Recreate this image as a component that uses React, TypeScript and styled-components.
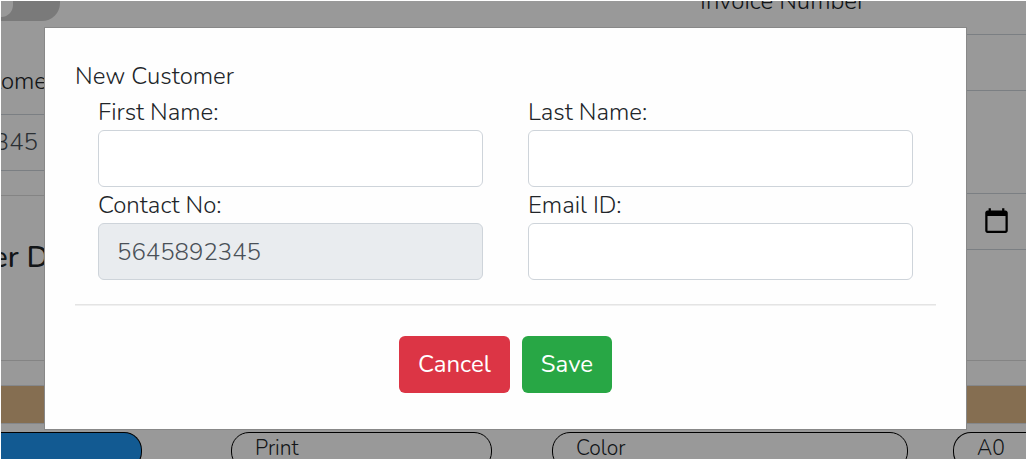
import React from "react";
import styled, { createGlobalStyle } from "styled-components";

const Global = createGlobalStyle`
  *, *::before, *::after { box-sizing: border-box; }
  body {
    margin: 0;
    background: #fff;
    color: #212529;
    font: 300 24px/36px Nunito, Lato, sans-serif;
    overflow: hidden;
  }
  input, button { font: inherit; color: inherit; margin: 0; }
`;

const Screen = styled.div`
  position: relative;
  height: 100vh;
  border: 1px solid #fff;
  overflow: hidden;
`;

const Columns = styled.div`
  display: flex;
  justify-content: space-between;
  min-height: 360px;
  border-bottom: 1px solid #dcdcdc;
`;

const Side = styled.div`
  width: 48px;
`;

const Invoice = styled.div`
  width: 326px;
`;

const Toggle = styled.div`
  width: 59px;
  height: 20px;
  background: #ccc;
  border-radius: 0 0 18px 0;
`;

const Knob = styled.div`
  width: 12px;
  height: 16px;
  background: #fff;
  border-radius: 0 0 12px 0;
`;

const ClippedText = styled.div<{ $inset?: number }>`
  display: flex;
  justify-content: flex-end;
  padding-right: ${(p) => p.$inset ?? 0}px;
  white-space: nowrap;
  overflow: hidden;
`;

const SideLabel = styled(ClippedText)`
  padding-top: 42px;
`;

const SideValue = styled(ClippedText)`
  margin-top: 15px;
  height: 57px;
  padding-bottom: 2px;
  align-items: center;
  border: solid #ced4da;
  border-width: 1px 0;
  color: #495057;
`;

const SideCard = styled.div`
  margin-top: 24px;
  padding-top: 44px;
  border-top: 1px solid #dcdcdc;
  font-size: 30px;
  font-weight: 500;
`;

const InvoiceLabel = styled.label`
  display: block;
  margin-top: -18px;
  padding-bottom: 15px;
`;

const PageField = styled.div`
  display: flex;
  align-items: center;
  justify-content: flex-end;
  height: 57px;
  padding: 0 16px 2px 0;
  border: solid #ced4da;
  border-width: 1px 0;

  & + & { margin-top: 102px; }
`;

const PageInput = styled.input`
  flex: 1;
  min-width: 0;
  border: 0;
  background: transparent;
`;

const IconButton = styled.button`
  display: flex;
  padding: 0;
  border: 0;
  background: none;
  color: #000;
`;

const Band = styled.div`
  height: 39px;
  margin-top: 24px;
  background: #deb887;
  border: solid #dee2e6;
  border-width: 1px 0;
`;

const PillRow = styled.div`
  display: grid;
  grid-template-columns: 230fr 321fr 401fr 73fr;
  margin-top: 8px;
`;

const Pill = styled.input<{ $gap: number; $first?: boolean; $last?: boolean }>`
  width: calc(100% - ${(p) => p.$gap}px);
  height: 38px;
  padding: 0 0 6px 23px;
  font-size: 21px;
  border: 1px solid #000;
  border-left-width: ${(p) => (p.$first ? 0 : 1)}px;
  border-right-width: ${(p) => (p.$last ? 0 : 1)}px;
  border-radius: ${(p) => (p.$first ? "0 18px 18px 0" : p.$last ? "18px 0 0 18px" : "18px")};
  background: ${(p) => (p.$first ? "#1e96f3" : "transparent")};
`;

const Backdrop = styled.div`
  position: absolute;
  inset: 0;
  padding: 26px 59px 0 43px;
  background: rgba(0, 0, 0, 0.4);
`;

const Dialog = styled.form`
  padding: 30px 30px 36px;
  background: #fefefe;
  border: 1px solid #888;
`;

const Title = styled.h1`
  margin: 0;
  font: inherit;
`;

const Fields = styled.div`
  display: grid;
  grid-template-columns: 1fr 1fr;
  column-gap: 45px;
  padding: 0 23px;
`;

const Field = styled.label`
  display: block;
`;

const TextBox = styled.input`
  display: block;
  width: 100%;
  height: 57px;
  padding: 9px 18px;
  border: 1px solid #ced4da;
  border-radius: 6px;
  background: #fff;
  color: #495057;

  &:read-only { background: #e9ecef; }
`;

const Divider = styled.hr`
  height: 2px;
  margin: 24px 0 30px;
  border: solid;
  border-width: 1px 0;
  border-color: #e4e4e4 transparent #f0f0f0;
`;

const Actions = styled.div`
  display: flex;
  justify-content: center;
  gap: 12px;
`;

const Action = styled.button<{ $color: string }>`
  height: 57px;
  padding: 0 19px 2px;
  border: 0;
  border-radius: 6px;
  background: ${(p) => p.$color};
  color: #fff;
  font-weight: 400;
`;

export default function App() {
  return (
    <>
      <Global />
      <Screen>
        <Columns>
          <Side>
            <Toggle>
              <Knob />
            </Toggle>
            <SideLabel $inset={2}>tome</SideLabel>
            <SideValue $inset={11}>345</SideValue>
            <SideCard>
              <ClippedText>er D</ClippedText>
            </SideCard>
          </Side>
          <Invoice>
            <InvoiceLabel htmlFor="invoice">Invoice Number</InvoiceLabel>
            <PageField>
              <PageInput id="invoice" />
            </PageField>
            <PageField>
              <PageInput aria-label="Invoice date" />
              <IconButton type="button" aria-label="Open calendar">
                <svg width="27" height="27" viewBox="0 0 24 24" fill="currentColor">
                  <path d="M20 3h-1V1h-2v2H7V1H5v2H4c-1.1 0-2 .9-2 2v16c0 1.1.9 2 2 2h16c1.1 0 2-.9 2-2V5c0-1.1-.9-2-2-2zm0 18H4V8h16v13z" />
                </svg>
              </IconButton>
            </PageField>
          </Invoice>
        </Columns>
        <Band />
        <PillRow>
          <Pill $gap={89} $first readOnly aria-label="Item" />
          <Pill $gap={60} readOnly defaultValue="Print" aria-label="Service" />
          <Pill $gap={45} readOnly defaultValue="Color" aria-label="Colour mode" />
          <Pill $gap={0} $last readOnly defaultValue="A0" aria-label="Paper size" />
        </PillRow>
        <Backdrop>
          <Dialog role="dialog" aria-label="New Customer">
            <Title>New Customer</Title>
            <Fields>
              <Field>
                First Name:
                <TextBox />
              </Field>
              <Field>
                Last Name:
                <TextBox />
              </Field>
              <Field>
                Contact No:
                <TextBox defaultValue="5645892345" readOnly />
              </Field>
              <Field>
                Email ID:
                <TextBox type="email" />
              </Field>
            </Fields>
            <Divider />
            <Actions>
              <Action type="button" $color="#dc3545">Cancel</Action>
              <Action type="button" $color="#28a745">Save</Action>
            </Actions>
          </Dialog>
        </Backdrop>
      </Screen>
    </>
  );
}
